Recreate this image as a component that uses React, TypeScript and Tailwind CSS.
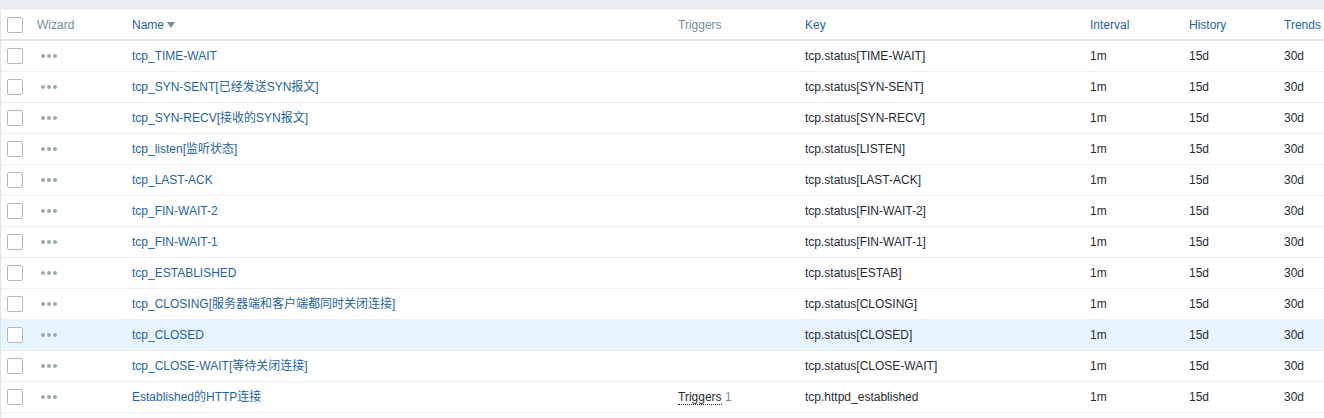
import React from "react";

type Row = { name: string; key: string; triggers?: number; hl?: boolean };

const rows: Row[] = [
  { name: "tcp_TIME-WAIT", key: "tcp.status[TIME-WAIT]" },
  { name: "tcp_SYN-SENT[已经发送SYN报文]", key: "tcp.status[SYN-SENT]" },
  { name: "tcp_SYN-RECV[接收的SYN报文]", key: "tcp.status[SYN-RECV]" },
  { name: "tcp_listen[监听状态]", key: "tcp.status[LISTEN]" },
  { name: "tcp_LAST-ACK", key: "tcp.status[LAST-ACK]" },
  { name: "tcp_FIN-WAIT-2", key: "tcp.status[FIN-WAIT-2]" },
  { name: "tcp_FIN-WAIT-1", key: "tcp.status[FIN-WAIT-1]" },
  { name: "tcp_ESTABLISHED", key: "tcp.status[ESTAB]" },
  { name: "tcp_CLOSING[服务器端和客户端都同时关闭连接]", key: "tcp.status[CLOSING]" },
  { name: "tcp_CLOSED", key: "tcp.status[CLOSED]", hl: true },
  { name: "tcp_CLOSE-WAIT[等待关闭连接]", key: "tcp.status[CLOSE-WAIT]" },
  { name: "Established的HTTP连接", key: "tcp.httpd_established", triggers: 1 },
];

function Box() {
  return <span className="block w-4 h-4 border border-[#acbbc2] rounded-[2px] bg-white" />;
}

function Dots() {
  return (
    <span className="flex gap-[2px] items-center">
      <span className="w-[4px] h-[4px] rounded-full bg-[#9aa8b0]" />
      <span className="w-[4px] h-[4px] rounded-full bg-[#9aa8b0]" />
      <span className="w-[4px] h-[4px] rounded-full bg-[#9aa8b0]" />
    </span>
  );
}

export default function App() {
  return (
    <div
      className="w-[1324px] h-[418px] overflow-hidden bg-[#ebeef0] text-[12px] text-[#1f2c33]"
      style={{ fontFamily: '"Liberation Sans", Arial, "Noto Sans CJK SC", sans-serif' }}
    >
      <div className="mt-[10px] bg-white border-l border-[#dfe4e7] w-[1500px]">
        <table className="table-fixed border-collapse w-[1500px]">
          <colgroup>
            <col className="w-[31px]" />
            <col className="w-[95px]" />
            <col className="w-[546px]" />
            <col className="w-[127px]" />
            <col className="w-[285px]" />
            <col className="w-[99px]" />
            <col className="w-[95px]" />
            <col className="w-[95px]" />
            <col />
          </colgroup>
          <thead>
            <tr className="h-[30px] border-b-2 border-[#dfe4e7] text-left">
              <th className="pl-[6px] pr-0 font-normal align-middle">
                <Box />
              </th>
              <th className="px-[5px] font-normal text-[#768d99]">Wizard</th>
              <th className="px-[5px] font-normal text-[#1f65a6]">
                <span className="inline-flex items-center gap-[3px]">
                  Name
                  <svg width="8" height="6" viewBox="0 0 8 6" className="mt-[1px]">
                    <path d="M0 0 H8 L4 6 Z" fill="#768d99" />
                  </svg>
                </span>
              </th>
              <th className="px-[5px] font-normal text-[#768d99]">Triggers</th>
              <th className="px-[5px] font-normal text-[#1f65a6]">Key</th>
              <th className="px-[5px] font-normal text-[#1f65a6]">Interval</th>
              <th className="px-[5px] font-normal text-[#1f65a6]">History</th>
              <th className="px-[5px] font-normal text-[#1f65a6]">Trends</th>
              <th className="px-[5px] font-normal text-[#1f65a6]">Type</th>
            </tr>
          </thead>
          <tbody>
            {rows.map((r) => (
              <tr
                key={r.key}
                className={`h-[31px] border-b border-[#ebeef0] ${r.hl ? "bg-[#e8f5ff]" : "bg-white"}`}
              >
                <td className="pl-[6px] pr-0 align-middle">
                  <Box />
                </td>
                <td className="pl-[9px] pr-[5px] align-middle">
                  <Dots />
                </td>
                <td className="px-[5px] text-[#1f65a6] whitespace-nowrap">{r.name}</td>
                <td className="px-[5px] whitespace-nowrap">
                  {r.triggers ? (
                    <>
                      <span className="border-b border-dotted border-[#1f2c33]">Triggers</span>
                      <span className="text-[#768d99]"> {r.triggers}</span>
                    </>
                  ) : null}
                </td>
                <td className="px-[5px] whitespace-nowrap">{r.key}</td>
                <td className="px-[5px]">1m</td>
                <td className="px-[5px]">15d</td>
                <td className="px-[5px]">30d</td>
                <td className="px-[5px]">Zabbix agent</td>
              </tr>
            ))}
            <tr className="h-[31px] bg-white">
              <td colSpan={9} />
            </tr>
          </tbody>
        </table>
      </div>
    </div>
  );
}
